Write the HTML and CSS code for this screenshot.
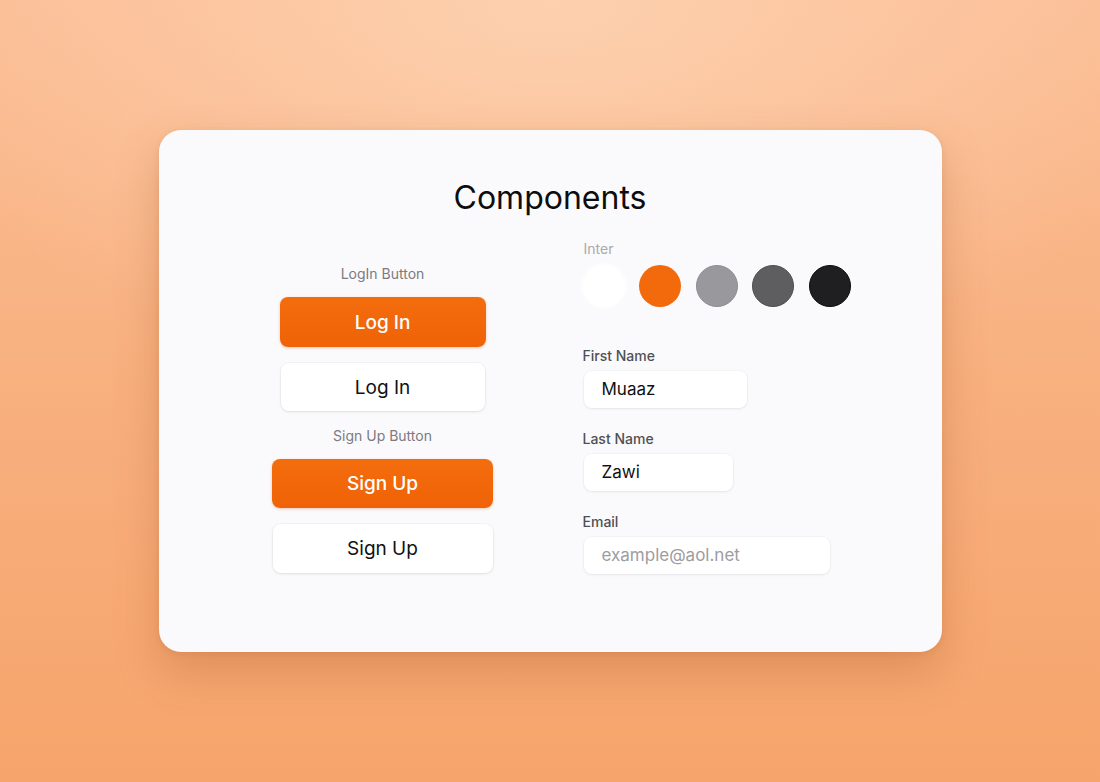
FILE: index.html
```html
<!DOCTYPE html>
<html>
<head>
<meta charset="utf-8">
<link rel="stylesheet" href="styles.css">
</head>
<body>
<div class="card">
  <h1 class="title">Components</h1>
  <div class="columns">
    <div class="col-left">
      <div class="section-label">LogIn Button</div>
      <button class="btn btn-primary btn-login">Log In</button>
      <button class="btn btn-secondary btn-login2">Log In</button>
      <div class="section-label label-signup">Sign Up Button</div>
      <button class="btn btn-primary btn-signup">Sign Up</button>
      <button class="btn btn-secondary btn-signup2">Sign Up</button>
    </div>
    <div class="col-right">
      <div class="font-label">Inter</div>
      <div class="swatches">
        <span class="swatch sw-white"></span>
        <span class="swatch sw-orange"></span>
        <span class="swatch sw-gray"></span>
        <span class="swatch sw-dark"></span>
        <span class="swatch sw-black"></span>
      </div>
      <div class="field field-first">
        <label class="field-label">First Name</label>
        <div class="input input-first">Muaaz</div>
      </div>
      <div class="field">
        <label class="field-label">Last Name</label>
        <div class="input input-last">Zawi</div>
      </div>
      <div class="field">
        <label class="field-label">Email</label>
        <div class="input input-email placeholder">example@aol.net</div>
      </div>
    </div>
  </div>
</div>
</body>
</html>
```

FILE: styles.css
```css
* { box-sizing: border-box; }
html, body { margin: 0; padding: 0; }
body {
  width: 1100px;
  height: 782px;
  overflow: hidden;
  font-family: Inter, "Noto Sans", sans-serif;
  background:
    radial-gradient(ellipse 700px 380px at 550px 0px, #fdd0ae 0%, rgba(253,205,171,0) 100%),
    linear-gradient(180deg, #fbbc93 0%, #f8b07f 50%, #f6a46b 100%);
  display: flex;
  align-items: center;
  justify-content: center;
}
.card {
  width: 783px;
  height: 522px;
  background: #fafafc;
  border-radius: 22px;
  box-shadow: 0 20px 44px rgba(170, 90, 40, 0.3), 0 2px 6px rgba(170, 90, 40, 0.15);
  padding-top: 48px;
}
.title {
  margin: 0;
  text-align: center;
  font-weight: 400;
  font-size: 32px;
  line-height: 40px;
  color: #0d0d0d;
  letter-spacing: 0;
}
.columns {
  display: flex;
  margin-top: 22px;
}
.col-left {
  width: 260px;
  margin-left: 94px;
  padding-top: 25px;
  display: flex;
  flex-direction: column;
  align-items: center;
}
.section-label {
  font-size: 14px;
  line-height: 17px;
  color: #7b7b7f;
}
.label-signup { margin-top: 16px; }
.btn {
  font-family: Inter, "Noto Sans", sans-serif;
  font-size: 19px;
  border-radius: 8px;
  border: none;
  padding: 0;
  display: block;
}
.btn-primary {
  background: linear-gradient(180deg, #f36d0d 0%, #f06207 100%);
  color: #fff;
  font-weight: 500;
  box-shadow: 0 1px 3px rgba(200, 80, 10, 0.3);
}
.btn-secondary {
  background: #ffffff;
  color: #111;
  font-weight: 400;
  box-shadow: 0 1px 3px rgba(0, 0, 0, 0.09), 0 0 0 1px rgba(0, 0, 0, 0.025);
}
.btn-login { width: 206px; height: 50px; margin-top: 15px; }
.btn-login2 { width: 204px; height: 48px; margin-top: 16px; }
.btn-signup { width: 221px; height: 49px; margin-top: 15px; }
.btn-signup2 { width: 220px; height: 49px; margin-top: 16px; }

.col-right {
  margin-left: 70px;
  display: flex;
  flex-direction: column;
}
.font-label {
  font-size: 14px;
  line-height: 17px;
  color: #a9a9ad;
  padding-left: 1px;
}
.swatches {
  display: flex;
  gap: 14.5px;
  margin-top: 8px;
}
.swatch {
  width: 42px;
  height: 42px;
  border-radius: 50%;
  display: block;
}
.sw-white { background: #ffffff; box-shadow: 0 0 5px 1px rgba(255,255,255,0.95); }
.sw-orange { background: #f26a0c; }
.sw-gray { background: #99989c; border: 1px solid #8f8e92; }
.sw-dark { background: #5e5d60; border: 1px solid #4f4e51; }
.sw-black { background: #1f1e21; border: 1.5px solid #0c0c0d; }

.field { display: flex; flex-direction: column; margin-top: 22px; }
.field-first { margin-top: 40px; }
.field-label {
  font-size: 14px;
  line-height: 17px;
  font-weight: 500;
  color: #505054;
}
.input {
  margin-top: 7px;
  height: 37px;
  background: #fff;
  border-radius: 8px;
  box-shadow: 0 1px 3px rgba(0, 0, 0, 0.07), 0 0 0 1px rgba(0, 0, 0, 0.02);
  font-size: 17px;
  line-height: 37px;
  padding-left: 18px;
  color: #111;
  margin-left: 1px;
}
.input-first { width: 163px; }
.input-last { width: 149px; }
.input-email { width: 246px; }
.placeholder { color: #9d9da1; }
```
